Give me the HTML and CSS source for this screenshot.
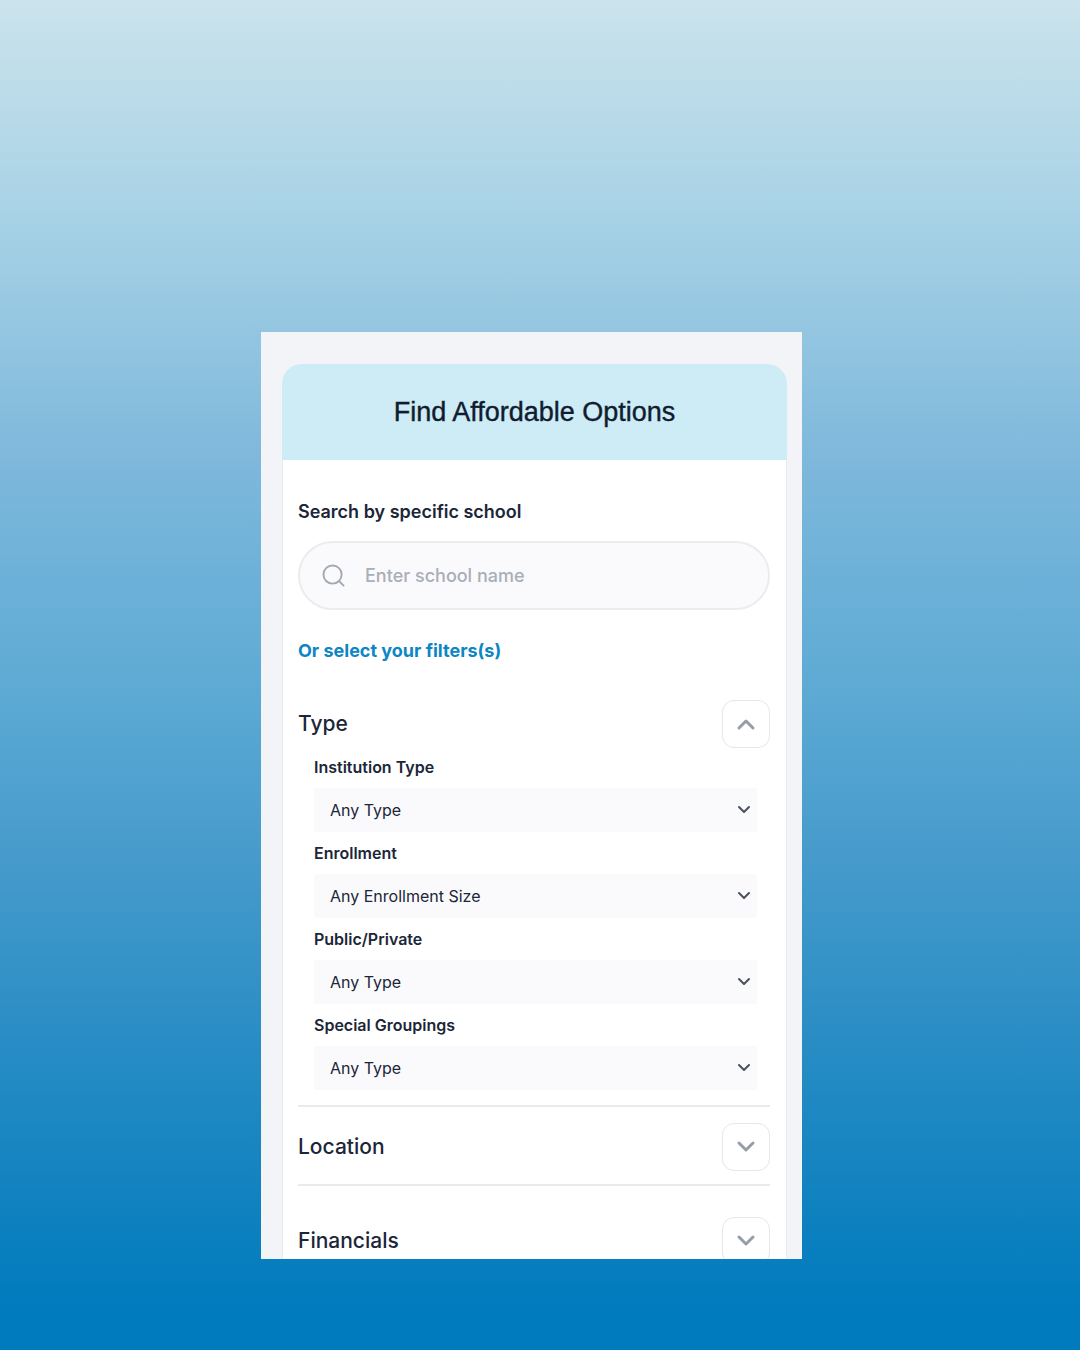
FILE: index.html
```html
<!DOCTYPE html>
<html lang="en">
<head>
    <meta charset="UTF-8">
    <meta name="viewport" content="width=device-width, initial-scale=1.0">
    <title>Find Affordable Options</title>
    <link rel="stylesheet" href="styles.css">
</head>
<body>
    <main class="screen">
        <div class="card">
            <header class="card-header">
                <h1>Find Affordable Options</h1>
            </header>

            <form class="card-body">
                <!-- School search -->
                <label class="search-label" for="school">Search by specific school</label>
                <div class="search-box">
                    <svg class="search-icon" viewBox="0 0 24 24" aria-hidden="true">
                        <circle cx="11" cy="11" r="9.5"/>
                        <path d="M18 18l4.5 4.5"/>
                    </svg>
                    <input type="text" id="school" placeholder="Enter school name">
                </div>

                <p class="filters-title">Or select your filters(s)</p>

                <!-- Type filters -->
                <section class="group group-open">
                    <div class="group-header">
                        <h2>Type</h2>
                        <button type="button" class="toggle" aria-label="Toggle Type" aria-expanded="true">
                            <svg viewBox="0 0 20 20" aria-hidden="true"><path d="M3 14l7-7 7 7"/></svg>
                        </button>
                    </div>
                    <div class="fields">
                        <div class="field">
                            <label for="institution">Institution Type</label>
                            <div class="select-box">
                                <select id="institution"><option>Any Type</option></select>
                                <svg viewBox="0 0 14 14" aria-hidden="true"><path d="M2 4l5 5 5-5"/></svg>
                            </div>
                        </div>
                        <div class="field">
                            <label for="enrollment">Enrollment</label>
                            <div class="select-box">
                                <select id="enrollment"><option>Any Enrollment Size</option></select>
                                <svg viewBox="0 0 14 14" aria-hidden="true"><path d="M2 4l5 5 5-5"/></svg>
                            </div>
                        </div>
                        <div class="field">
                            <label for="control">Public/Private</label>
                            <div class="select-box">
                                <select id="control"><option>Any Type</option></select>
                                <svg viewBox="0 0 14 14" aria-hidden="true"><path d="M2 4l5 5 5-5"/></svg>
                            </div>
                        </div>
                        <div class="field">
                            <label for="groupings">Special Groupings</label>
                            <div class="select-box">
                                <select id="groupings"><option>Any Type</option></select>
                                <svg viewBox="0 0 14 14" aria-hidden="true"><path d="M2 4l5 5 5-5"/></svg>
                            </div>
                        </div>
                    </div>
                </section>

                <!-- Collapsed groups -->
                <section class="group">
                    <div class="group-header">
                        <h2>Location</h2>
                        <button type="button" class="toggle" aria-label="Toggle Location" aria-expanded="false">
                            <svg viewBox="0 0 20 20" aria-hidden="true"><path d="M3 6l7 7 7-7"/></svg>
                        </button>
                    </div>
                </section>
                <section class="group group-last">
                    <div class="group-header">
                        <h2>Financials</h2>
                        <button type="button" class="toggle" aria-label="Toggle Financials" aria-expanded="false">
                            <svg viewBox="0 0 20 20" aria-hidden="true"><path d="M3 6l7 7 7-7"/></svg>
                        </button>
                    </div>
                </section>
            </form>
        </div>
    </main>
</body>
</html>
```
FILE: styles.css
```css
* {
    margin: 0;
    padding: 0;
    box-sizing: border-box;
}

body {
    display: flex;
    flex-direction: column;
    height: 100vh;
    padding: 332px 278px 91px 261px;
    background: linear-gradient(#cbe3ec 0%, #a5d1e5 17%, #80b9dc 33%, #5fabd5 50%, #4198ca 66%, #1c87c2 83%, #007bbd 97%);
    font-family: "Inter", "Open Sans", sans-serif;
    color: #1b2638;
}

svg {
    fill: none;
    stroke-linecap: round;
    stroke-linejoin: round;
}

/* Visible part of the phone page, the rest is cut off */
.screen {
    flex: 1;
    min-height: 0;
    padding: 32px 15px 0 21px;
    overflow: hidden;
    background-color: #f3f4f7;
}

.card-header {
    padding: 32px 16px;
    border-radius: 20px 20px 0 0;
    background-color: #ceecf5;
    text-align: center;
}

h1 {
    font-family: "Liberation Sans", Arial, sans-serif;
    font-size: 27px;
    font-weight: 400;
    line-height: 32px;
    color: #101c30;
    -webkit-text-stroke: 0.4px #101c30;
}

.card-body {
    padding: 39px 16px 32px 15px;
    border: 1px solid #e9eaee;
    border-top: none;
    background-color: #fff;
}

.search-label {
    display: block;
    font-size: 18px;
    font-weight: 600;
    line-height: 26px;
}

.search-box {
    display: flex;
    align-items: center;
    gap: 20px;
    height: 69px;
    margin: 16px 0 28px;
    padding: 0 22px;
    border: 2px solid #ebecef;
    border-radius: 35px;
    background-color: #fafafc;
}

.search-icon {
    width: 23px;
    height: 23px;
    stroke: #a3a9b3;
    stroke-width: 2;
}

.search-box input {
    flex: 1;
    min-width: 0;
    border: none;
    outline: none;
    background: none;
    font: 500 18px "Inter", sans-serif;
    color: #1b2638;
}

.search-box input::placeholder {
    color: #a9aeb7;
}

.filters-title {
    margin-bottom: 36px;
    font-size: 18px;
    font-weight: 700;
    line-height: 26px;
    color: #0c86c4;
}

.group {
    padding: 16px 0 13px;
    border-bottom: 2px solid #e9eaee;
}

.group-open {
    padding: 0 0 15px;
}

.group-last {
    padding-top: 31px;
    border-bottom: none;
}

.group-header {
    display: flex;
    align-items: center;
    justify-content: space-between;
}

h2 {
    font-size: 21px;
    font-weight: 500;
    line-height: 28px;
}

.toggle {
    display: flex;
    align-items: center;
    justify-content: center;
    width: 48px;
    height: 48px;
    border: 1px solid #e4e6ea;
    border-radius: 12px;
    background-color: #fff;
    cursor: pointer;
}

.toggle svg {
    width: 20px;
    height: 20px;
    stroke: #959da8;
    stroke-width: 3;
}

.fields {
    display: grid;
    gap: 11px;
    padding: 9px 13px 0 16px;
}

.field label {
    display: block;
    margin-bottom: 11px;
    font-size: 16px;
    font-weight: 600;
    line-height: 20px;
}

/* The arrow shares the grid cell with the select */
.select-box {
    display: grid;
    align-items: center;
}

.select-box select,
.select-box svg {
    grid-area: 1 / 1;
}

.select-box select {
    width: 100%;
    height: 44px;
    padding: 0 40px 0 16px;
    border: none;
    border-radius: 2px;
    background-color: #fafafc;
    appearance: none;
    font: 400 16px "Inter", sans-serif;
    color: #1b2638;
}

.select-box svg {
    justify-self: end;
    width: 14px;
    height: 14px;
    margin-right: 6px;
    stroke: #4a5260;
    stroke-width: 2;
    pointer-events: none;
}
```
